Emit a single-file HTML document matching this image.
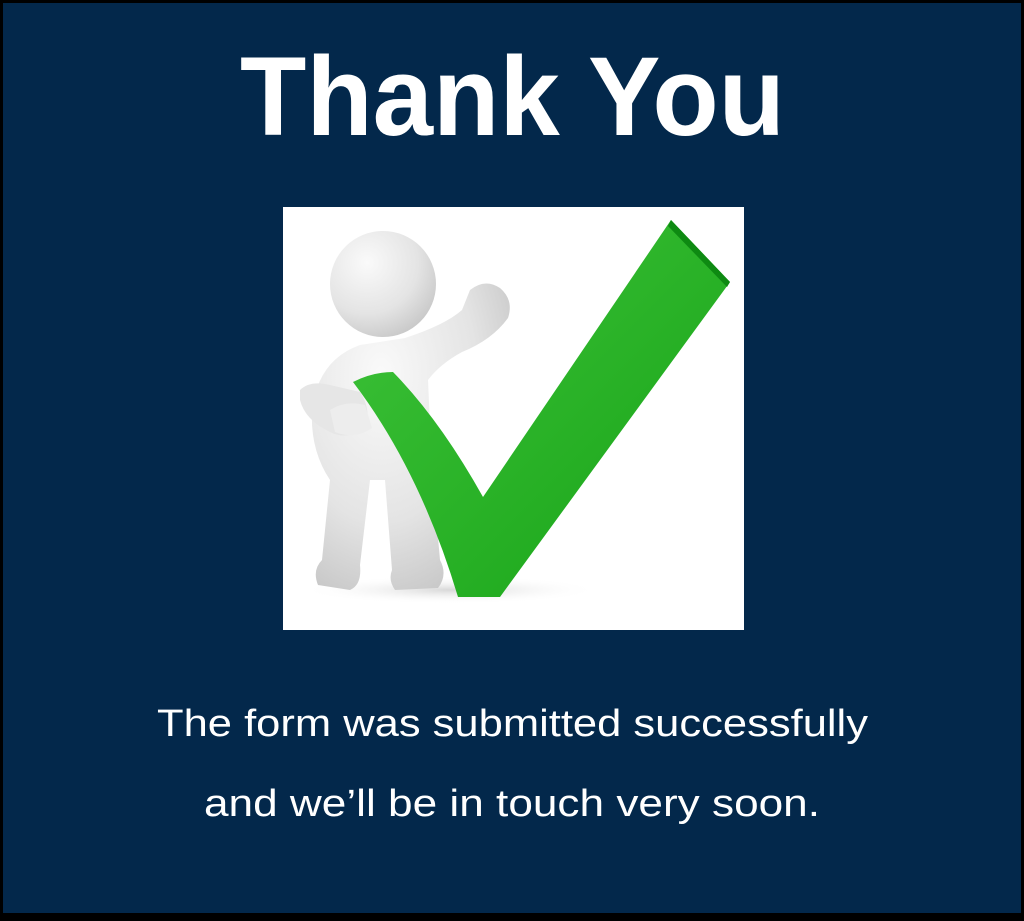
<!DOCTYPE html>
<html><head><meta charset="utf-8"><style>
html,body{margin:0;padding:0;}
body{width:1024px;height:916px;overflow:hidden;background:#000;}
</style></head><body>
<svg width="1024" height="916" viewBox="0 0 1024 916" xmlns="http://www.w3.org/2000/svg">
<defs>
<radialGradient id="g" cx="0.35" cy="0.3" r="0.8"><stop offset="0" stop-color="#fafafa"/><stop offset="0.6" stop-color="#e4e4e4"/><stop offset="1" stop-color="#c4c4c4"/></radialGradient>
<linearGradient id="gr" x1="0" y1="0" x2="1" y2="1"><stop offset="0" stop-color="#3fc33a"/><stop offset="1" stop-color="#17a317"/></linearGradient>
<radialGradient id="sh" cx="0.5" cy="0.5" r="0.5"><stop offset="0" stop-color="#d8d8d8"/><stop offset="1" stop-color="#fff" stop-opacity="0"/></radialGradient>
</defs>
<rect x="3" y="3" width="1018" height="910" fill="#03284b"/>
<text x="240" y="135" font-family="Liberation Sans, sans-serif" font-weight="bold" font-size="112" fill="#fff" textLength="545" lengthAdjust="spacingAndGlyphs">Thank You</text>
<rect x="283" y="207" width="461" height="423" fill="#fff"/>
<ellipse cx="450" cy="590" rx="150" ry="14" fill="url(#sh)"/>
<!-- figure -->
<path d="M318 585 Q312 570 322 560 L330 480 Q310 450 312 410 Q318 360 360 345 L405 338 Q445 325 462 310 L470 290 Q485 278 500 288 Q514 300 508 318 Q492 340 462 352 Q440 364 428 380 L432 470 L440 560 Q448 575 438 588 L395 590 Q388 580 392 570 L385 480 L370 480 L360 565 Q362 585 350 590 Z" fill="url(#g)"/>
<circle cx="383" cy="284" r="53" fill="url(#g)"/>
<path d="M300 390 Q310 380 330 385 L360 392 Q372 410 365 430 Q345 440 330 432 Q305 420 300 400 Z" fill="#e6e6e6"/>
<!-- check -->
<path d="M353 382 Q372 372 393 372 Q440 420 483 497 L671 220 L730 282 L500 597 L458 597 Q420 470 353 382 Z" fill="url(#gr)"/>
<polygon points="671,220 730,282 727,287 668,226" fill="#0e8a12"/>
<path d="M330 410 Q345 400 365 405 L372 428 Q355 440 335 432 Z" fill="#ededed"/>
<text x="157" y="736" font-family="Liberation Sans, sans-serif" font-size="38" fill="#fff" textLength="711" lengthAdjust="spacingAndGlyphs">The form was submitted successfully</text>
<text x="204" y="816" font-family="Liberation Sans, sans-serif" font-size="38" fill="#fff" textLength="616" lengthAdjust="spacingAndGlyphs">and we’ll be in touch very soon.</text>
</svg>
</body></html>
